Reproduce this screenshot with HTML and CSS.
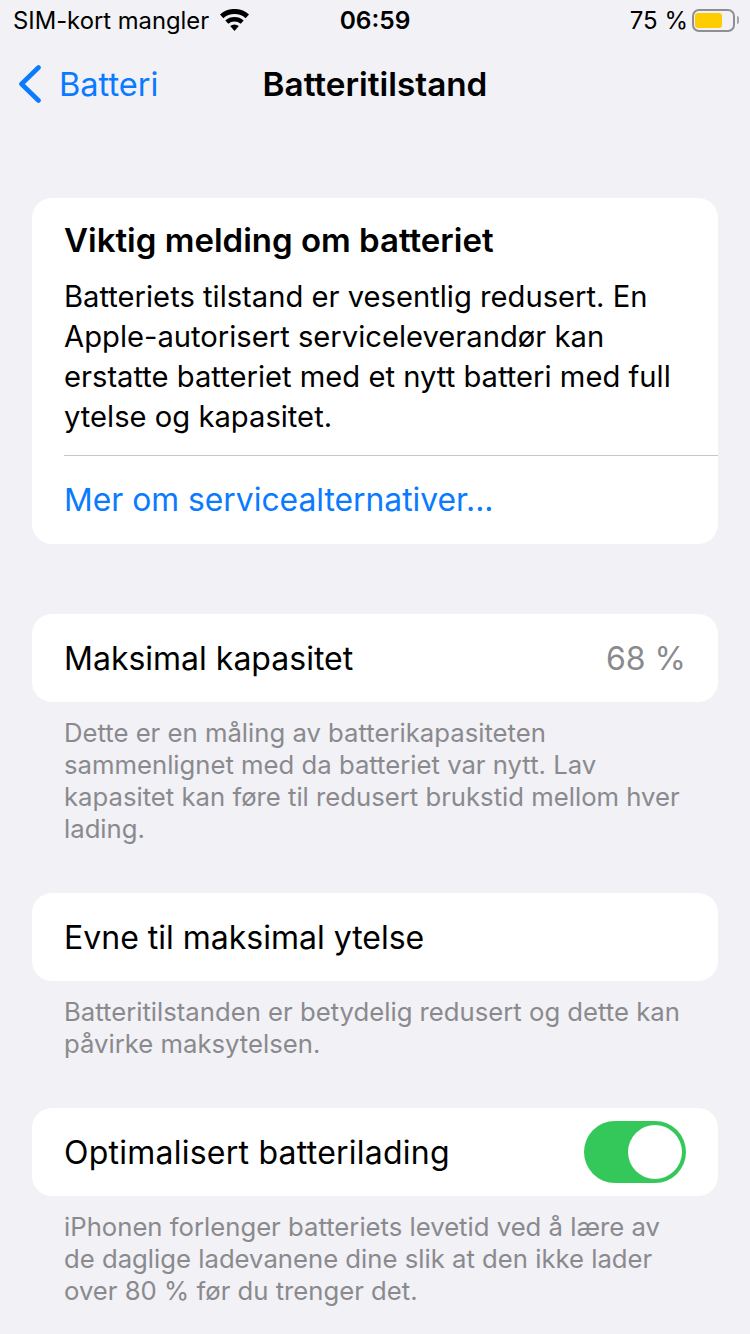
FILE: index.html
```html
<!DOCTYPE html>
<html lang="no">
<head>
    <meta charset="UTF-8">
    <meta name="viewport" content="width=device-width, initial-scale=1.0">
    <title>Batteritilstand</title>
    <link rel="stylesheet" href="styles.css">
</head>
<body>
    <div class="status-bar">
        <div class="status-left">
            <span>SIM-kort mangler</span>
            <svg class="wifi" viewBox="0 0 29 22" width="29" height="22">
                <path d="M0 5.400A22 22 0 0 1 29 5.400L25.650 9.200A17 17 0 0 0 3.350 9.200z" fill="#000"/>
                <path d="M5.300 11.400A14 14 0 0 1 23.700 11.400L20.700 14.800A9.500 9.500 0 0 0 8.300 14.800z" fill="#000"/>
                <path d="M10.200 17.100A6.500 6.500 0 0 1 18.800 17.100L14.500 22z" fill="#000"/>
            </svg>
        </div>
        <span class="status-time">06:59</span>
        <div class="status-right">
            <span>75 %</span>
            <div class="battery"><div class="battery-level"></div></div>
            <div class="battery-cap"></div>
        </div>
    </div>

    <div class="nav-bar">
        <div class="nav-back">
            <svg viewBox="0 0 26 38" width="26" height="38">
                <path d="M21.500 2.500L4.500 19l17 16.500" fill="none" stroke="#0a7aff" stroke-width="4.600" stroke-linecap="round" stroke-linejoin="round"/>
            </svg>
            <span>Batteri</span>
        </div>
        <h1 class="nav-title">Batteritilstand</h1>
    </div>

    <main class="content">
        <section class="card notice">
            <h2>Viktig melding om batteriet</h2>
            <p>Batteriets tilstand er vesentlig redusert. En Apple-autorisert serviceleverandør kan erstatte batteriet med et nytt batteri med full ytelse og kapasitet.</p>
            <div class="divider"></div>
            <div class="link">Mer om servicealternativer...</div>
        </section>

        <section class="group first">
            <div class="card row">
                <span>Maksimal kapasitet</span>
                <span class="value">68 %</span>
            </div>
            <p class="note">Dette er en måling av batterikapasiteten sammenlignet med da batteriet var nytt. Lav kapasitet kan føre til redusert brukstid mellom hver lading.</p>
        </section>

        <section class="group">
            <div class="card row">
                <span>Evne til maksimal ytelse</span>
            </div>
            <p class="note">Batteritilstanden er betydelig redusert og dette kan påvirke maksytelsen.</p>
        </section>

        <section class="group">
            <div class="card row">
                <span class="row-label-wide">Optimalisert batterilading</span>
                <div class="switch"><div class="knob"></div></div>
            </div>
            <p class="note">iPhonen forlenger batteriets levetid ved å lære av de daglige ladevanene dine slik at den ikke lader over 80 % før du trenger det.</p>
        </section>
    </main>
</body>
</html>
```

FILE: styles.css
```css
body {
    margin: 0;
    height: 1334px;
    overflow: hidden;
    background-color: #f1f1f6;
    color: #000;
    font-family: Inter, "Liberation Sans", sans-serif;
}

.status-bar {
    display: grid;
    grid-template-columns: 1fr auto 1fr;
    align-items: center;
    height: 40px;
    padding: 0 13px;
    font-size: 23.800px;
}

.status-left {
    display: flex;
    align-items: center;
    gap: 11px;
}

.status-time {
    font-size: 24.500px;
    font-weight: 600;
}

.status-right {
    display: flex;
    align-items: center;
    justify-content: flex-end;
    margin-right: -2px;
}

.status-right span {
    font-size: 24px;
}

.battery {
    box-sizing: border-box;
    width: 43px;
    height: 23px;
    margin-left: 4px;
    padding: 2px 1px;
    border: 2px solid #8e8e93;
    border-radius: 7px;
}

.battery-level {
    width: 27px;
    height: 100%;
    background-color: #ffcc00;
    border-radius: 3px;
}

.battery-cap {
    width: 2px;
    height: 8px;
    margin-left: 2px;
    background-color: #a5a5aa;
    border-radius: 0 2px 2px 0;
}

.nav-bar {
    display: grid;
    grid-template-columns: 1fr auto 1fr;
    align-items: center;
    height: 88px;
}

.nav-back {
    display: flex;
    align-items: center;
    gap: 16px;
    padding-left: 17px;
    color: #0a7aff;
    font-size: 32.600px;
}

.nav-title {
    margin: 0;
    font-size: 33.300px;
    font-weight: 600;
}

.content {
    padding: 70px 32px 0;
}

.card {
    background-color: #fff;
    border-radius: 20px;
}

.notice {
    box-sizing: border-box;
    height: 346px;
    padding: 22px 0 0 32px;
}

.notice h2 {
    margin: 0 0 17px;
    font-size: 33px;
    line-height: 40px;
    font-weight: 600;
}

.notice p {
    margin: 0;
    padding-right: 32px;
    font-size: 29.200px;
    line-height: 40px;
}

.divider {
    height: 1px;
    margin-top: 18px;
    background-color: #c6c6c8;
}

.link {
    margin-top: 24px;
    color: #0a7aff;
    font-size: 31.800px;
    line-height: 40px;
}

.group {
    margin-top: 48px;
}

.group.first {
    margin-top: 70px;
}

.row {
    box-sizing: border-box;
    display: flex;
    align-items: center;
    justify-content: space-between;
    height: 88px;
    padding: 0 32px;
    font-size: 32px;
}

.row-label-wide {
    letter-spacing: 0.24px;
}

.value {
    color: #8a8a8e;
}

.note {
    margin: 15px 0 0;
    padding: 0 32px;
    color: #8a8a8e;
    font-size: 25.700px;
    line-height: 32px;
}

.switch {
    box-sizing: border-box;
    display: flex;
    justify-content: flex-end;
    width: 102px;
    height: 62px;
    padding: 4px;
    background-color: #34c759;
    border-radius: 31px;
}

.knob {
    width: 54px;
    height: 54px;
    background-color: #fff;
    border-radius: 50%;
}
```
